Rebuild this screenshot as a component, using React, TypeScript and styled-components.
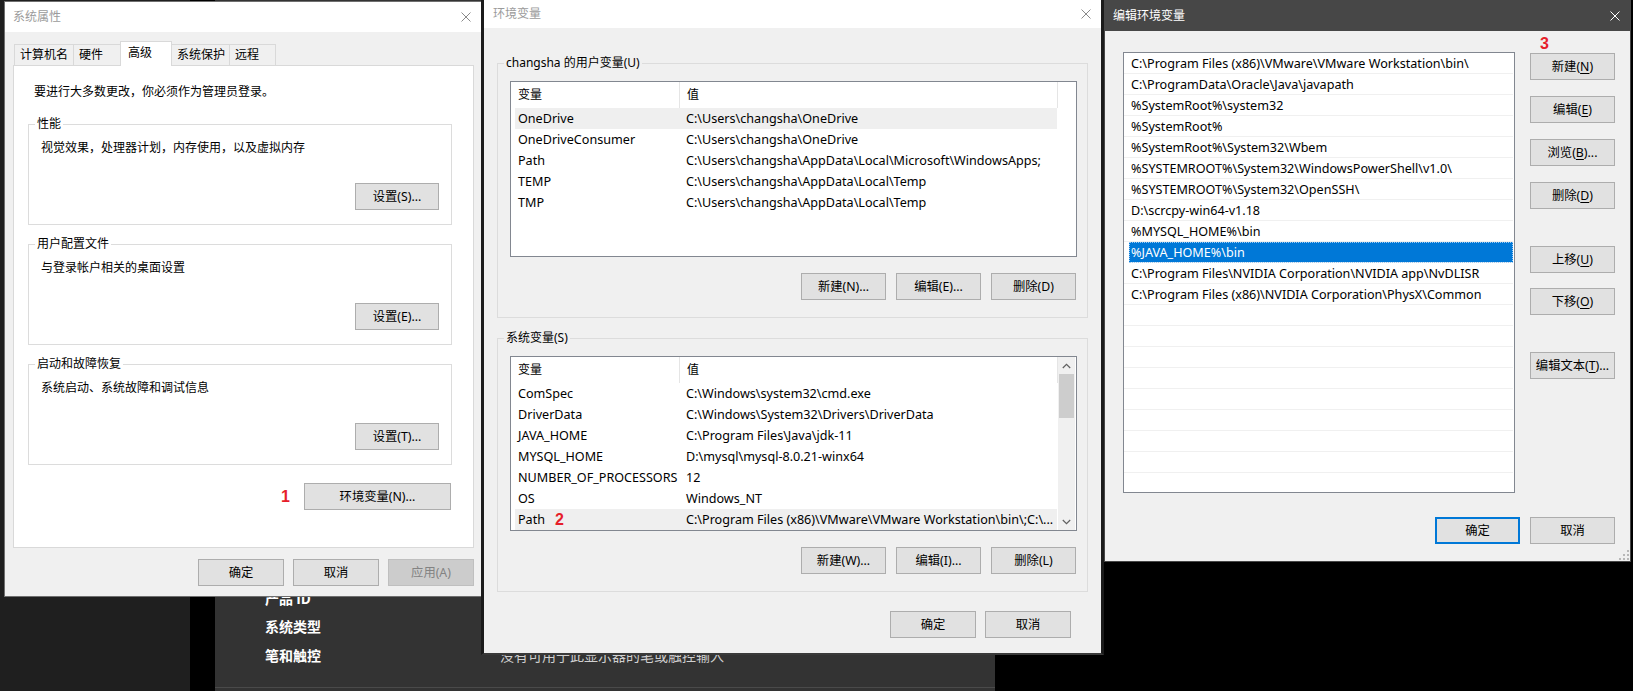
import React from "react";
import styled, { createGlobalStyle, css } from "styled-components";

const FONT = `"Noto Sans", "Noto Sans CJK SC", sans-serif`;

const GlobalStyle = createGlobalStyle`
  * { box-sizing: border-box; }
  html, body { margin: 0; padding: 0; background: #000; }
  body { font-family: ${FONT}; font-size: 12px; color: #000; overflow: hidden; }
`;

const Desktop = styled.div`
  position: relative;
  width: 1633px;
  height: 691px;
  overflow: hidden;
  background: #000;
`;

/* ---------- background settings app ---------- */
const SettingsSidebar = styled.div`
  position: absolute;
  left: 0;
  top: 0;
  width: 190px;
  height: 691px;
  background: #1f1f1f;
`;

const SettingsPanel = styled.div`
  position: absolute;
  left: 215px;
  top: 0;
  width: 780px;
  height: 691px;
  background: #333333;
  display: flex;
  flex-direction: column;
  justify-content: flex-end;
  padding: 0 0 3px 50px;
  font-family: "Noto Sans CJK SC", sans-serif;
`;

const SettingRow = styled.div`
  display: flex;
  align-items: center;
  height: 28.5px;
`;

const SettingLabel = styled.div`
  width: 235px;
  font-size: 14px;
  font-weight: 700;
  color: #ffffff;
`;

const SettingValue = styled.div`
  font-size: 14px;
  color: #cfcfcf;
`;

const SettingDivider = styled.div`
  height: 1px;
  margin: 18px 0 0 -50px;
  background: #4a4a4a;
`;

/* ---------- generic window parts ---------- */
const Window = styled.div`
  position: absolute;
  display: flex;
  flex-direction: column;
  background: #f0f0f0;
  font-family: ${FONT};
  font-size: 12px;
  color: #000;
`;

const TitleBar = styled.div<{ $dark?: boolean; $h: number; $pl: number }>`
  flex: none;
  height: ${(p) => p.$h}px;
  display: flex;
  align-items: center;
  justify-content: space-between;
  padding-left: ${(p) => p.$pl}px;
  background: ${(p) => (p.$dark ? "#474747" : "#ffffff")};
  color: ${(p) => (p.$dark ? "#ffffff" : "#9b9b9b")};
  line-height: 16px;
`;

const CloseBox = styled.div<{ $mr: number }>`
  width: 30px;
  height: 100%;
  margin-right: ${(p) => p.$mr}px;
  display: flex;
  align-items: center;
  justify-content: center;
`;

const CloseIcon = ({ color }: { color: string }) => (
  <svg width="10" height="10" viewBox="0 0 10 10">
    <path d="M0.5 0.5 L9.5 9.5 M9.5 0.5 L0.5 9.5" stroke={color} strokeWidth="1" fill="none" />
  </svg>
);

const Button = styled.div<{ $w: number; $default?: boolean; $disabled?: boolean; $mt?: number }>`
  flex: none;
  width: ${(p) => p.$w}px;
  height: 27px;
  margin-top: ${(p) => p.$mt ?? 0}px;
  display: flex;
  align-items: center;
  justify-content: center;
  background: ${(p) => (p.$disabled ? "#cccccc" : "#e1e1e1")};
  border: ${(p) => (p.$default ? "2px solid #0078d7" : p.$disabled ? "1px solid #bfbfbf" : "1px solid #adadad")};
  color: ${(p) => (p.$disabled ? "#838383" : "#000")};
  white-space: nowrap;
  line-height: 16px;
  font-size: 12.3px;
`;

const Accel = styled.span`
  text-decoration: underline;
  text-underline-offset: 2px;
`;

const RedMark = styled.span`
  font-family: "Liberation Sans", Arial, sans-serif;
  font-weight: 700;
  font-size: 16px;
  color: #e61e2b;
  line-height: 16px;
`;

const GroupBox = styled.fieldset<{ $mt: number }>`
  margin: ${(p) => p.$mt}px 0 0 0;
  padding: 0;
  border: 1px solid #dcdcdc;
  min-width: 0;
`;

const GroupLegend = styled.legend`
  margin-left: 6px;
  padding: 0 2px;
  font-size: 12px;
  line-height: 16px;
`;

const ButtonRow = styled.div<{ $mt: number; $gap: number; $mr?: number }>`
  display: flex;
  justify-content: flex-end;
  align-items: center;
  gap: ${(p) => p.$gap}px;
  margin-top: ${(p) => p.$mt}px;
  margin-right: ${(p) => p.$mr ?? 0}px;
`;

/* ---------- 系统属性 ---------- */
const SysPropsWindow = styled(Window)`
  left: 4px;
  top: 1px;
  width: 480px;
  height: 596px;
  border: 1px solid #6f6f6f;
`;

const SysBody = styled.div`
  flex: 1;
  display: flex;
  flex-direction: column;
  padding: 9px 9px 10px 8px;
`;

const TabStrip = styled.div`
  flex: none;
  display: flex;
  align-items: flex-end;
  height: 24px;
  padding-left: 1px;
  position: relative;
  z-index: 1;
`;

const Tab = styled.div<{ $w: number; $active?: boolean }>`
  flex: none;
  width: ${(p) => p.$w}px;
  height: ${(p) => (p.$active ? 25 : 21)}px;
  margin-right: -1px;
  margin-bottom: ${(p) => (p.$active ? -1 : 0)}px;
  border: 1px solid #d9d9d9;
  border-bottom: none;
  background: ${(p) => (p.$active ? "#ffffff" : "#f0f0f0")};
  padding-left: ${(p) => (p.$active ? 7 : 5)}px;
  padding-bottom: ${(p) => (p.$active ? 2 : 0)}px;
  display: flex;
  align-items: center;
  position: relative;
  z-index: ${(p) => (p.$active ? 2 : 1)};
  line-height: 16px;
`;

const TabPanel = styled.div`
  flex: 1;
  display: flex;
  flex-direction: column;
  background: #ffffff;
  border: 1px solid #d9d9d9;
  padding: 18px 21px 0 14px;
`;

const Notice = styled.div`
  margin-left: 6px;
  line-height: 16px;
`;

const SysGroupContent = styled.div`
  display: flex;
  flex-direction: column;
  padding: 8px 12px 14px 12px;
`;

const GroupText = styled.div`
  line-height: 16px;
`;

const SysFooter = styled.div`
  flex: none;
  display: flex;
  justify-content: flex-end;
  gap: 9px;
  margin-top: 11px;
`;

/* ---------- 环境变量 ---------- */
const EnvWindow = styled(Window)`
  left: 481px;
  top: 0;
  width: 623px;
  height: 655px;
  border-left: 3px solid #1b1b1b;
  border-right: 3px solid #1b1b1b;
  border-bottom: 2px solid #3a3a3a;
`;

const EnvBody = styled.div`
  flex: 1;
  display: flex;
  flex-direction: column;
  padding: 27px 13px 15px 13px;
`;

const EnvGroupContent = styled.div`
  display: flex;
  flex-direction: column;
  padding: 10px 10px 17px 12px;
`;

const ListView = styled.div<{ $h: number }>`
  flex: none;
  height: ${(p) => p.$h}px;
  border: 1px solid #828790;
  background: #ffffff;
  display: flex;
  overflow: hidden;
`;

const ListMain = styled.div`
  flex: 1;
  min-width: 0;
  display: flex;
  flex-direction: column;
`;

const ListHeader = styled.div`
  flex: none;
  display: flex;
  height: 26px;
`;

const HeaderCell = styled.div<{ $w: number }>`
  flex: none;
  width: ${(p) => p.$w}px;
  padding-left: 7px;
  border-right: 1px solid #e5e5e5;
  display: flex;
  align-items: center;
  line-height: 16px;
`;

const ListRows = styled.div`
  padding-left: 4px;
`;

const ListRow = styled.div<{ $selected?: boolean }>`
  display: flex;
  align-items: center;
  width: 542px;
  height: 21px;
  background: ${(p) => (p.$selected ? "#efefef" : "transparent")};
  line-height: 16px;
  font-size: 12.6px;
`;

const NameCell = styled.div`
  flex: none;
  width: 164px;
  padding-left: 3px;
  display: flex;
  align-items: center;
  gap: 10px;
  white-space: nowrap;
`;

const ValueCell = styled.div`
  flex: 1;
  min-width: 0;
  padding-left: 7px;
  white-space: nowrap;
  overflow: hidden;
`;

const ScrollBar = styled.div`
  flex: none;
  width: 17px;
  margin-right: 1px;
  background: #f0f0f0;
  display: flex;
  flex-direction: column;
`;

const ScrollArrow = styled.div`
  flex: none;
  height: 17px;
  display: flex;
  align-items: center;
  justify-content: center;
`;

const ScrollTrack = styled.div`
  flex: 1;
  display: flex;
  justify-content: center;
`;

const ScrollThumb = styled.div`
  width: 15px;
  height: 44px;
  background: #cdcdcd;
`;

const Chevron = ({ up }: { up?: boolean }) => (
  <svg width="9" height="6" viewBox="0 0 9 6">
    <path
      d={up ? "M0.8 5 L4.5 1.3 L8.2 5" : "M0.8 1 L4.5 4.7 L8.2 1"}
      stroke="#606060"
      strokeWidth="1.2"
      fill="none"
    />
  </svg>
);

const EnvFooter = styled.div`
  flex: none;
  display: flex;
  justify-content: flex-end;
  gap: 9px;
  margin-top: 19px;
  margin-right: 17px;
`;

/* ---------- 编辑环境变量 ---------- */
const EditWindow = styled(Window)`
  left: 1104px;
  top: 0;
  width: 527px;
  height: 562px;
  border: 1px solid #474747;
  border-top: none;
`;

const EditBody = styled.div`
  flex: 1;
  display: flex;
  flex-direction: column;
  padding: 21px 15px 17px 18px;
  position: relative;
`;

const EditMain = styled.div`
  display: flex;
  gap: 15px;
`;

const PathList = styled.div`
  flex: none;
  width: 392px;
  height: 441px;
  border: 1px solid #828790;
  background: #ffffff;
  overflow: hidden;
  display: flex;
  flex-direction: column;
`;

const PathRow = styled.div<{ $selected?: boolean }>`
  flex: none;
  height: 21px;
  margin-right: 1px;
  border-bottom: 1px solid #f0f0f0;
  padding: 2px 0 0 7px;
  line-height: 18px;
  font-size: 12.6px;
  white-space: nowrap;
  ${(p) =>
    p.$selected &&
    css`
      margin-left: 5px;
      padding-left: 2px;
      background: #0078d7;
      color: #ffffff;
      outline: 1px dotted #9fcbf2;
      outline-offset: -1px;
    `}
`;

const ButtonColumn = styled.div`
  flex: none;
  width: 85px;
  display: flex;
  flex-direction: column;
  position: relative;
`;

const StepBadge = styled(RedMark)`
  position: absolute;
  left: 10px;
  top: -16px;
`;

const EditFooter = styled.div`
  flex: none;
  display: flex;
  justify-content: flex-end;
  gap: 10px;
  margin-top: 24px;
`;

const ResizeGrip = styled.div`
  position: absolute;
  right: 1px;
  bottom: 1px;
  width: 11px;
  height: 11px;
  display: flex;
`;

/* ---------- data ---------- */
const userVars: [string, string][] = [
  ["OneDrive", "C:\\Users\\changsha\\OneDrive"],
  ["OneDriveConsumer", "C:\\Users\\changsha\\OneDrive"],
  ["Path", "C:\\Users\\changsha\\AppData\\Local\\Microsoft\\WindowsApps;"],
  ["TEMP", "C:\\Users\\changsha\\AppData\\Local\\Temp"],
  ["TMP", "C:\\Users\\changsha\\AppData\\Local\\Temp"],
];

const sysVars: [string, string][] = [
  ["ComSpec", "C:\\Windows\\system32\\cmd.exe"],
  ["DriverData", "C:\\Windows\\System32\\Drivers\\DriverData"],
  ["JAVA_HOME", "C:\\Program Files\\Java\\jdk-11"],
  ["MYSQL_HOME", "D:\\mysql\\mysql-8.0.21-winx64"],
  ["NUMBER_OF_PROCESSORS", "12"],
  ["OS", "Windows_NT"],
  ["Path", "C:\\Program Files (x86)\\VMware\\VMware Workstation\\bin\\;C:\\..."],
];

const paths: string[] = [
  "C:\\Program Files (x86)\\VMware\\VMware Workstation\\bin\\",
  "C:\\ProgramData\\Oracle\\Java\\javapath",
  "%SystemRoot%\\system32",
  "%SystemRoot%",
  "%SystemRoot%\\System32\\Wbem",
  "%SYSTEMROOT%\\System32\\WindowsPowerShell\\v1.0\\",
  "%SYSTEMROOT%\\System32\\OpenSSH\\",
  "D:\\scrcpy-win64-v1.18",
  "%MYSQL_HOME%\\bin",
  "%JAVA_HOME%\\bin",
  "C:\\Program Files\\NVIDIA Corporation\\NVIDIA app\\NvDLISR",
  "C:\\Program Files (x86)\\NVIDIA Corporation\\PhysX\\Common",
  "", "", "", "", "", "", "", "", "",
];

const tabs: { label: string; w: number; active?: boolean }[] = [
  { label: "计算机名", w: 60 },
  { label: "硬件", w: 48 },
  { label: "高级", w: 52, active: true },
  { label: "系统保护", w: 59 },
  { label: "远程", w: 47 },
];

const sysGroups = [
  { title: "性能", text: "视觉效果，处理器计划，内存使用，以及虚拟内存", btn: "设置(S)...", mt: 16 },
  { title: "用户配置文件", text: "与登录帐户相关的桌面设置", btn: "设置(E)...", mt: 11 },
  { title: "启动和故障恢复", text: "系统启动、系统故障和调试信息", btn: "设置(T)...", mt: 11 },
];

const VarList = ({
  rows,
  height,
  scroll,
  selected,
  mark,
}: {
  rows: [string, string][];
  height: number;
  scroll?: boolean;
  selected: number;
  mark?: number;
}) => (
  <ListView $h={height}>
    <ListMain>
      <ListHeader>
        <HeaderCell $w={169}>变量</HeaderCell>
        <HeaderCell $w={378}>值</HeaderCell>
      </ListHeader>
      <ListRows>
        {rows.map(([name, value], i) => (
          <ListRow key={name + i} $selected={i === selected}>
            <NameCell>
              {name}
              {mark === i && <RedMark>2</RedMark>}
            </NameCell>
            <ValueCell>{value}</ValueCell>
          </ListRow>
        ))}
      </ListRows>
    </ListMain>
    {scroll && (
      <ScrollBar>
        <ScrollArrow>
          <Chevron up />
        </ScrollArrow>
        <ScrollTrack>
          <ScrollThumb />
        </ScrollTrack>
        <ScrollArrow>
          <Chevron />
        </ScrollArrow>
      </ScrollBar>
    )}
  </ListView>
);

export default function App() {
  return (
    <Desktop>
      <GlobalStyle />
      <SettingsSidebar />
      <SettingsPanel>
        <SettingRow>
          <SettingLabel>产品 ID</SettingLabel>
          <SettingValue></SettingValue>
        </SettingRow>
        <SettingRow>
          <SettingLabel>系统类型</SettingLabel>
          <SettingValue>64 位操作系统, 基于 x64 的处理器</SettingValue>
        </SettingRow>
        <SettingRow>
          <SettingLabel>笔和触控</SettingLabel>
          <SettingValue>没有可用于此显示器的笔或触控输入</SettingValue>
        </SettingRow>
        <SettingDivider />
      </SettingsPanel>

      {/* 系统属性 */}
      <SysPropsWindow>
        <TitleBar $h={30} $pl={8}>
          <span>系统属性</span>
          <CloseBox $mr={2}>
            <CloseIcon color="#8a8a8a" />
          </CloseBox>
        </TitleBar>
        <SysBody>
          <TabStrip>
            {tabs.map((t) => (
              <Tab key={t.label} $w={t.w} $active={t.active}>
                {t.label}
              </Tab>
            ))}
          </TabStrip>
          <TabPanel>
            <Notice>要进行大多数更改，你必须作为管理员登录。</Notice>
            {sysGroups.map((g) => (
              <GroupBox key={g.title} $mt={g.mt}>
                <GroupLegend>{g.title}</GroupLegend>
                <SysGroupContent>
                  <GroupText>{g.text}</GroupText>
                  <ButtonRow $mt={27} $gap={0}>
                    <Button $w={84}>{g.btn}</Button>
                  </ButtonRow>
                </SysGroupContent>
              </GroupBox>
            ))}
            <ButtonRow $mt={18} $gap={14} $mr={1}>
              <RedMark>1</RedMark>
              <Button $w={147}>环境变量(N)...</Button>
            </ButtonRow>
          </TabPanel>
          <SysFooter>
            <Button $w={86}>确定</Button>
            <Button $w={86}>取消</Button>
            <Button $w={86} $disabled>
              应用(A)
            </Button>
          </SysFooter>
        </SysBody>
      </SysPropsWindow>

      {/* 环境变量 */}
      <EnvWindow>
        <TitleBar $h={28} $pl={9}>
          <span>环境变量</span>
          <CloseBox $mr={0}>
            <CloseIcon color="#8a8a8a" />
          </CloseBox>
        </TitleBar>
        <EnvBody>
          <GroupBox $mt={0}>
            <GroupLegend>changsha 的用户变量(U)</GroupLegend>
            <EnvGroupContent>
              <VarList rows={userVars} height={176} selected={0} />
              <ButtonRow $mt={16} $gap={10} $mr={1}>
                <Button $w={85}>新建(N)...</Button>
                <Button $w={85}>编辑(E)...</Button>
                <Button $w={85}>删除(D)</Button>
              </ButtonRow>
            </EnvGroupContent>
          </GroupBox>
          <GroupBox $mt={12}>
            <GroupLegend>系统变量(S)</GroupLegend>
            <EnvGroupContent>
              <VarList rows={sysVars} height={175} scroll selected={6} mark={6} />
              <ButtonRow $mt={16} $gap={10} $mr={1}>
                <Button $w={85}>新建(W)...</Button>
                <Button $w={85}>编辑(I)...</Button>
                <Button $w={85}>删除(L)</Button>
              </ButtonRow>
            </EnvGroupContent>
          </GroupBox>
          <EnvFooter>
            <Button $w={86}>确定</Button>
            <Button $w={86}>取消</Button>
          </EnvFooter>
        </EnvBody>
      </EnvWindow>

      {/* 编辑环境变量 */}
      <EditWindow>
        <TitleBar $dark $h={31} $pl={8}>
          <span>编辑环境变量</span>
          <CloseBox $mr={0}>
            <CloseIcon color="#ffffff" />
          </CloseBox>
        </TitleBar>
        <EditBody>
          <EditMain>
            <PathList>
              {paths.map((p, i) => (
                <PathRow key={i} $selected={i === 9}>
                  {p}
                </PathRow>
              ))}
            </PathList>
            <ButtonColumn>
              <StepBadge>3</StepBadge>
              <Button $w={85} $mt={1}>
                新建(<Accel>N</Accel>)
              </Button>
              <Button $w={85} $mt={16}>
                编辑(<Accel>E</Accel>)
              </Button>
              <Button $w={85} $mt={16}>
                浏览(<Accel>B</Accel>)...
              </Button>
              <Button $w={85} $mt={16}>
                删除(<Accel>D</Accel>)
              </Button>
              <Button $w={85} $mt={37}>
                上移(<Accel>U</Accel>)
              </Button>
              <Button $w={85} $mt={15}>
                下移(<Accel>O</Accel>)
              </Button>
              <Button $w={85} $mt={37}>
                编辑文本(<Accel>T</Accel>)...
              </Button>
            </ButtonColumn>
          </EditMain>
          <EditFooter>
            <Button $w={85} $default>
              确定
            </Button>
            <Button $w={85}>取消</Button>
          </EditFooter>
          <ResizeGrip>
            <svg width="11" height="11" viewBox="0 0 11 11">
              {[
                [8, 0],
                [4, 4],
                [8, 4],
                [0, 8],
                [4, 8],
                [8, 8],
              ].map(([x, y]) => (
                <rect key={`${x}-${y}`} x={x + 1} y={y + 1} width="2" height="2" fill="#b8b8b8" />
              ))}
            </svg>
          </ResizeGrip>
        </EditBody>
      </EditWindow>
    </Desktop>
  );
}
